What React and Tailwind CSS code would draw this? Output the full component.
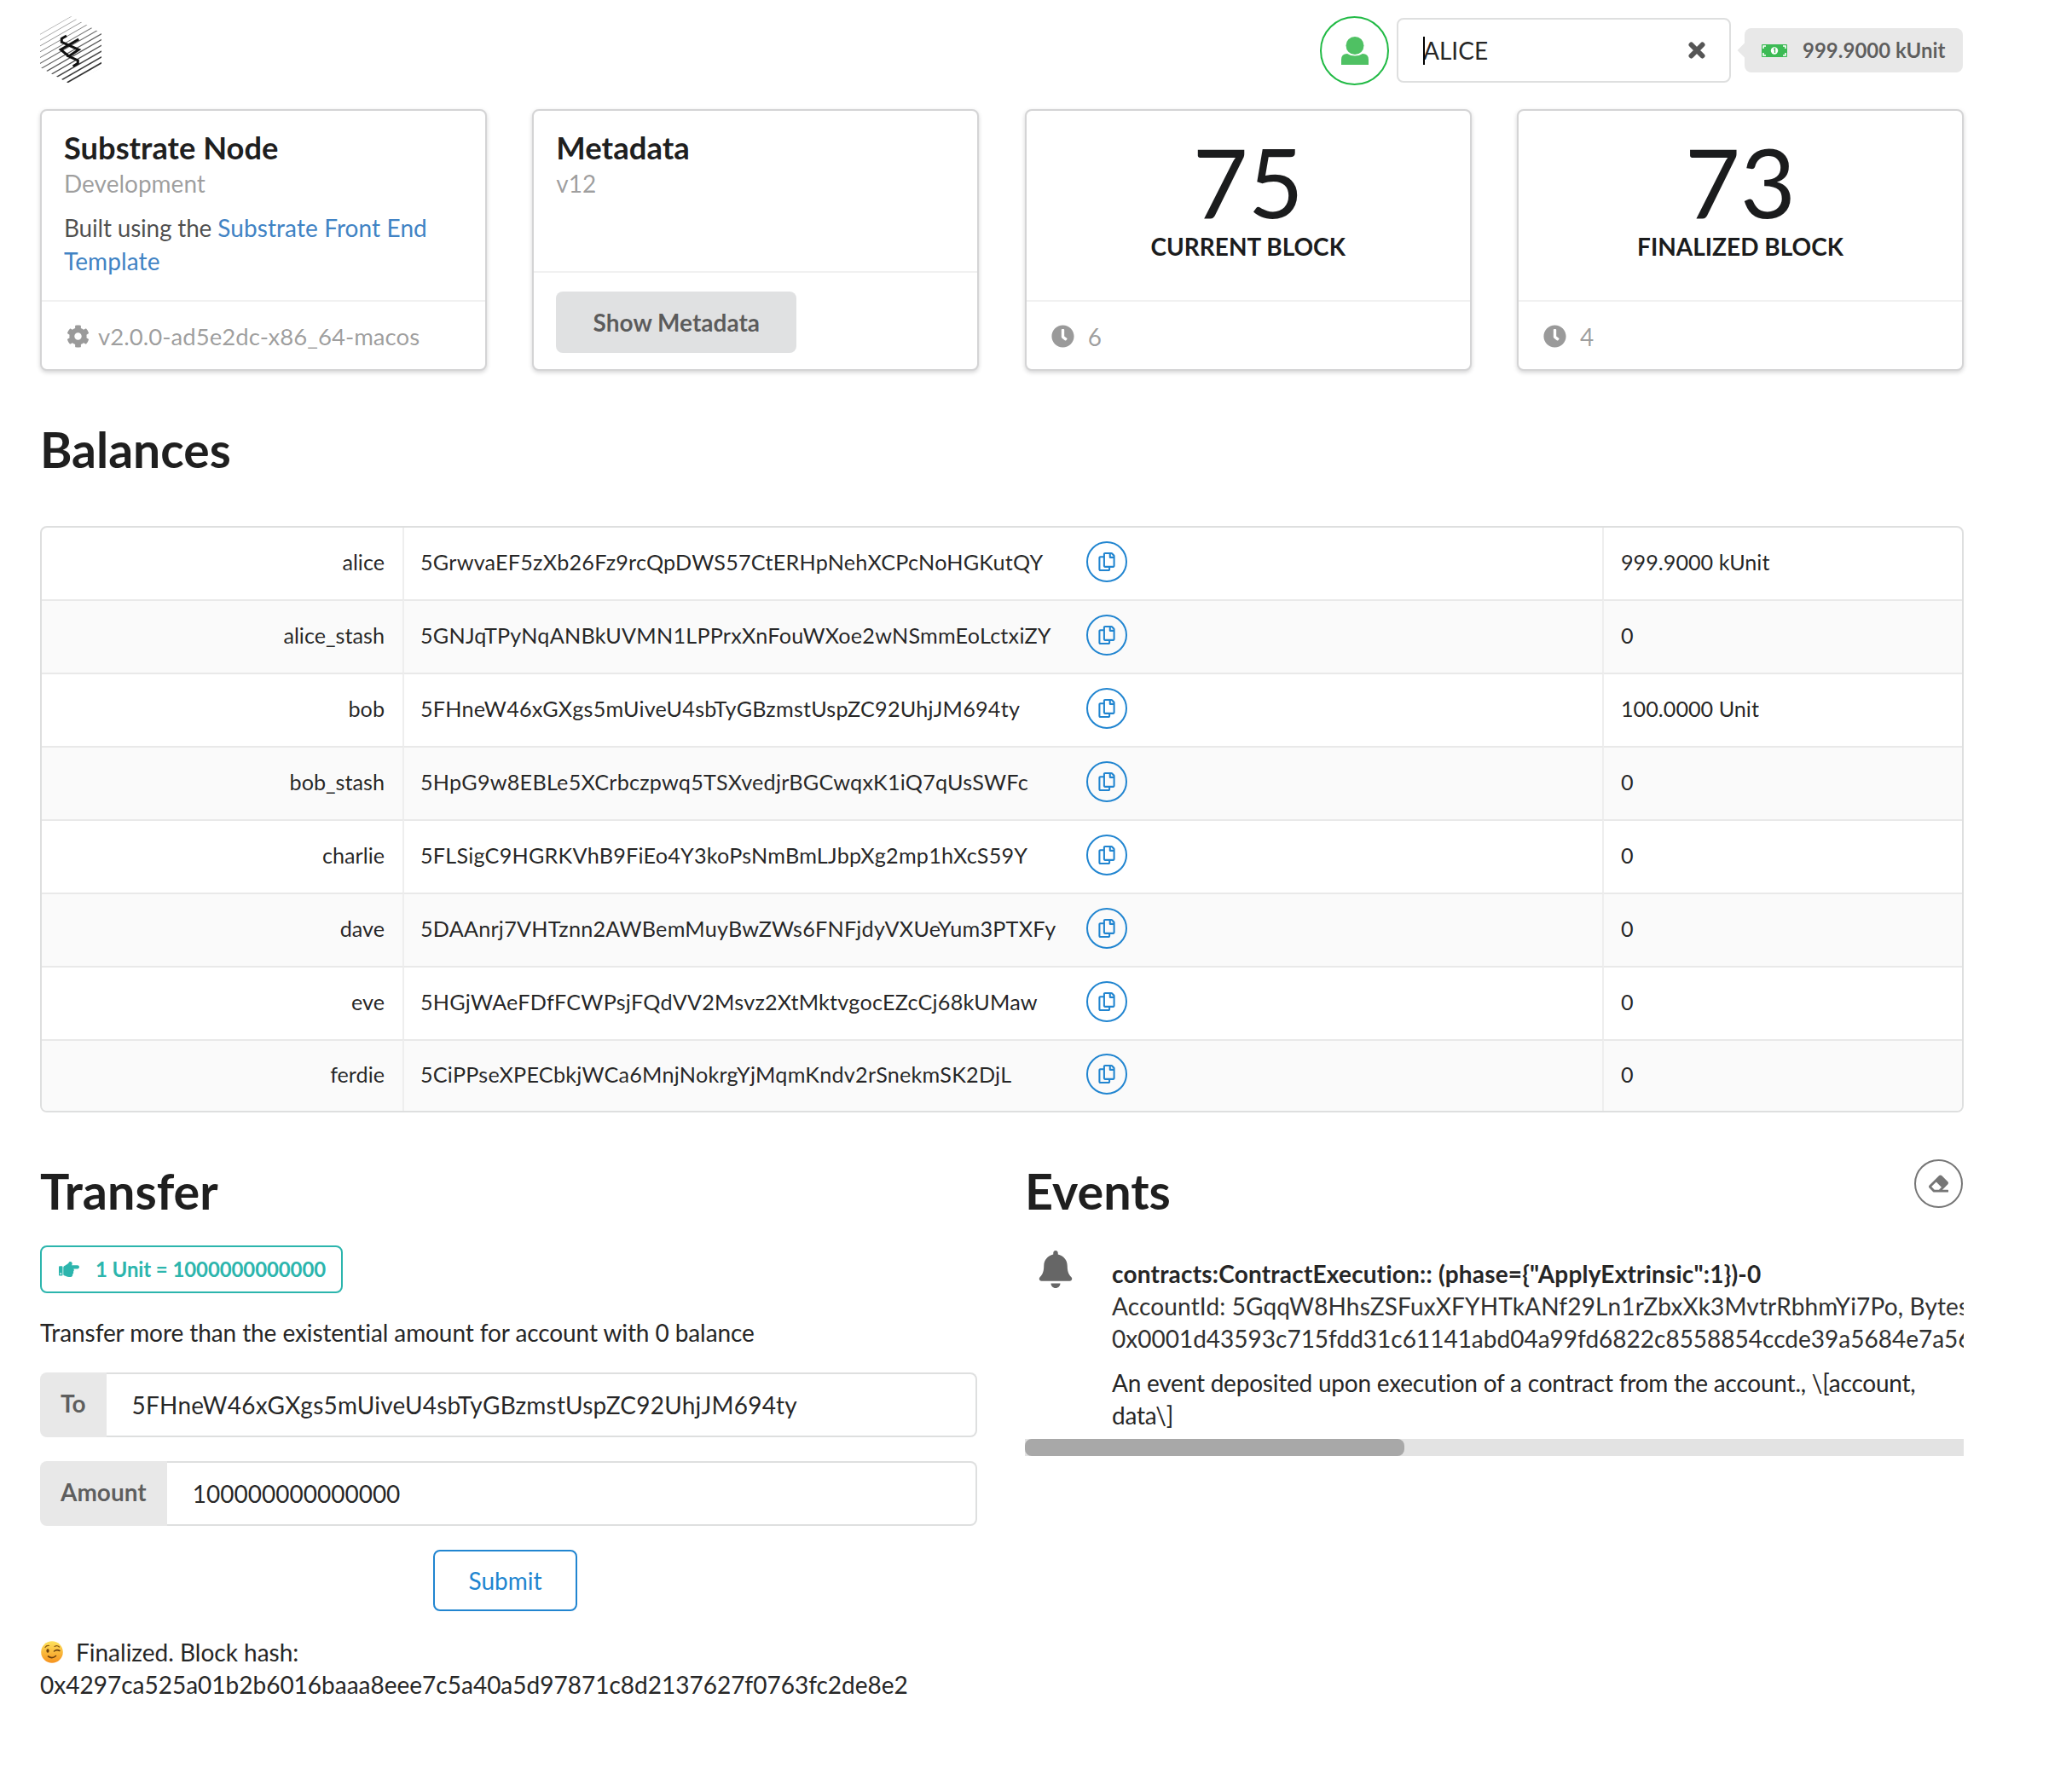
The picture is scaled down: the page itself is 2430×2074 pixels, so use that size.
import React from "react";
import { FaCog, FaClock, FaRegCopy, FaHandPointRight, FaBell, FaEraser } from "react-icons/fa";

const accounts = [
  { name: "alice", address: "5GrwvaEF5zXb26Fz9rcQpDWS57CtERHpNehXCPcNoHGKutQY", balance: "999.9000 kUnit" },
  { name: "alice_stash", address: "5GNJqTPyNqANBkUVMN1LPPrxXnFouWXoe2wNSmmEoLctxiZY", balance: "0" },
  { name: "bob", address: "5FHneW46xGXgs5mUiveU4sbTyGBzmstUspZC92UhjJM694ty", balance: "100.0000 Unit" },
  { name: "bob_stash", address: "5HpG9w8EBLe5XCrbczpwq5TSXvedjrBGCwqxK1iQ7qUsSWFc", balance: "0" },
  { name: "charlie", address: "5FLSigC9HGRKVhB9FiEo4Y3koPsNmBmLJbpXg2mp1hXcS59Y", balance: "0" },
  { name: "dave", address: "5DAAnrj7VHTznn2AWBemMuyBwZWs6FNFjdyVXUeYum3PTXFy", balance: "0" },
  { name: "eve", address: "5HGjWAeFDfFCWPsjFQdVV2Msvz2XtMktvgocEZcCj68kUMaw", balance: "0" },
  { name: "ferdie", address: "5CiPPseXPECbkjWCa6MnjNokrgYjMqmKndv2rSnekmSK2DjL", balance: "0" },
];

const hatch = Array.from({ length: 19 }, (_, i) => i);

function Logo() {
  return (
    <svg width="72" height="80" viewBox="0 0 72 80">
      <defs>
        <clipPath id="hex">
          <path d="M36 0 L72 20 V60 L36 80 L0 60 V20 Z" />
        </clipPath>
      </defs>
      <g clipPath="url(#hex)" stroke="#111">
        {hatch.map((i) => (
          <line
            key={i}
            x1="-4"
            x2="76"
            y1={24 + i * 6.8 - 14}
            y2={24 + i * 6.8 - 60}
            strokeWidth={0.5 + i * 0.09}
            strokeOpacity={0.35 + i * 0.04}
          />
        ))}
      </g>
      <g fill="none" stroke="#111" strokeWidth="3">
        <path d="M31 23 L25.3 26.3 V30.3 L45.3 39.3 L33.7 47 L44.3 52 V55.3 L38.7 58.7" />
        <path d="M45.3 27 L24.3 39.3 L33.7 47" />
      </g>
    </svg>
  );
}

function UserIcon() {
  return (
    <svg width="32" height="33" viewBox="0 0 32 33" fill="#4fc163">
      <circle cx="16" cy="10.5" r="10.5" />
      <path d="M0 33 V27 Q0 20 7 20 Q11 22.5 16 22.5 Q21 22.5 25 20 Q32 20 32 27 V33 Z" />
    </svg>
  );
}

function CloseIcon() {
  return (
    <svg width="20" height="20" viewBox="0 0 20 20">
      <path d="M3.5 3.5 L16.5 16.5 M16.5 3.5 L3.5 16.5" stroke="#555" strokeWidth="6" strokeLinecap="round" />
    </svg>
  );
}

function MoneyIcon() {
  return (
    <svg width="30" height="15" viewBox="0 0 30 15">
      <rect width="30" height="15" rx="1" fill="#3cba54" />
      <path d="M2 5 V2 H5 M25 2 H28 V5 M2 10 V13 H5 M28 10 V13 H25" fill="none" stroke="#fff" strokeWidth="1.6" />
      <circle cx="15" cy="7.5" r="4.2" fill="#fff" />
      <path d="M14 5.8 L15.5 5 V10" fill="none" stroke="#3cba54" strokeWidth="1.3" />
    </svg>
  );
}

function WinkFace() {
  return (
    <svg width="26" height="26" viewBox="0 0 26 26">
      <defs>
        <linearGradient id="wink" x1="0" y1="0" x2="0" y2="1">
          <stop offset="0" stopColor="#fde25c" />
          <stop offset="1" stopColor="#f6921e" />
        </linearGradient>
      </defs>
      <circle cx="13" cy="13" r="12.8" fill="url(#wink)" />
      <ellipse cx="8" cy="11.5" rx="1.6" ry="2.2" fill="#6b3f0c" />
      <path d="M15.5 12 Q18.5 9.5 22 11.5" fill="none" stroke="#6b3f0c" strokeWidth="1.5" strokeLinecap="round" />
      <path d="M5 7.5 Q6.5 5 9.5 5.5 M16 6.5 Q19 4.5 21.5 7" fill="none" stroke="#8a5a14" strokeWidth="1.2" strokeLinecap="round" />
      <path d="M8.5 18 Q13 21.5 17.5 17.5" fill="none" stroke="#6b3f0c" strokeWidth="1.6" strokeLinecap="round" />
    </svg>
  );
}

function Card({ children, footer, footerClass }) {
  return (
    <div className="h-[307px] flex flex-col border-2 border-[#d4d4d5] rounded-lg bg-white shadow-[0_2px_5px_0_#d4d4d5]">
      <div className="h-[222px] px-[26px] pt-[25px]">{children}</div>
      <div className={`flex-1 border-t-2 border-[#f1f1f1] ${footerClass}`}>{footer}</div>
    </div>
  );
}

function Stat({ value, label, footer }) {
  return (
    <Card
      footerClass="flex items-center px-[26px] pt-[2px] text-black/40"
      footer={
        <>
          <FaClock className="text-[27px] text-[#9a9a9a] mr-[16px] ml-[3px]" />
          <span>{footer}</span>
        </>
      }
    >
      <div className="text-center">
        <div className="text-[112px] leading-none text-[#1b1c1d] mt-[2px]">{value}</div>
        <div className="text-[28px] font-bold leading-[40px] uppercase text-[#1b1c1d]">{label}</div>
      </div>
    </Card>
  );
}

function FormInput({ label, value, inputClass }) {
  return (
    <div className="flex h-[76px]">
      <div className="px-[24px] flex items-start pt-[16px] bg-[#e8e8e8] rounded-l-lg font-bold text-black/60">{label}</div>
      <input
        readOnly
        value={value}
        className={`flex-1 px-[30px] border-2 border-l-0 border-[#dedfdf] rounded-r-lg outline-none text-black/87 font-['Lato'] text-[28px] ${inputClass}`}
      />
    </div>
  );
}

export default function App() {
  return (
    <div className="bg-white min-h-[2074px] font-['Lato',sans-serif] text-[28px] leading-[40px] text-black/87">
      <div className="w-[2256px] ml-[47px]">
        {/* top bar */}
        <div className="h-[128px] pb-[10px] flex items-center justify-between pr-[1px]">
          <Logo />
          <div className="flex items-center">
            <div className="w-[81px] h-[81px] rounded-full border-2 border-[#21ba45] flex items-center justify-center">
              <UserIcon />
            </div>
            <div className="w-[392px] h-[76px] ml-[9px] border-2 border-[#dedfdf] rounded-lg flex items-center justify-between pl-[29px] pr-[28px] relative">
              <span className="text-[#262626]">ALICE</span>
              <span className="absolute left-[29px] top-[20px] w-[1.5px] h-[33px] bg-black" />
              <CloseIcon />
            </div>
            <div className="relative ml-[16px] h-[52px] w-[256px] rounded-lg bg-[#e8e8e8] flex items-center pl-[20px] text-[24px] font-bold text-black/60">
              <span className="absolute left-[-6px] top-[20px] w-[12px] h-[12px] rotate-45 bg-[#e8e8e8]" />
              <MoneyIcon />
              <span className="ml-[18px]">999.9000 kUnit</span>
            </div>
          </div>
        </div>

        {/* cards */}
        <div className="grid grid-cols-[repeat(4,524px)] justify-between">
          <Card
            footerClass="flex items-center px-[26px] pt-[2px] text-black/40"
            footer={
              <>
                <FaCog className="text-[27px] text-[#9a9a9a] mr-[10px] ml-[3px]" />
                <span className="text-[27.6px]">v2.0.0-ad5e2dc-x86_64-macos</span>
              </>
            }
          >
            <div className="text-[36.3px] font-bold leading-[36px] text-[#1f1f1f]">Substrate Node</div>
            <div className="text-black/40 mt-[4px]">Development</div>
            <div className="mt-[13px] leading-[39px] text-black/70">
              <span className="tracking-[-0.2px]">Built using the </span>
              <span className="tracking-[0.1px] text-[#4183c4]">Substrate Front End Template</span>
            </div>
          </Card>
          <div className="h-[307px] flex flex-col border-2 border-[#d4d4d5] rounded-lg bg-white shadow-[0_2px_5px_0_#d4d4d5]">
            <div className="h-[188px] px-[26px] pt-[25px]">
              <div className="text-[36.5px] font-bold leading-[36px] text-[#1f1f1f]">Metadata</div>
              <div className="text-black/40 mt-[4px]">v12</div>
            </div>
            <div className="flex-1 border-t-2 border-[#f1f1f1] px-[26px] pt-[22px]">
              <button className="h-[72px] w-[282px] rounded-lg bg-[#e0e1e2] font-bold text-black/60">Show Metadata</button>
            </div>
          </div>
          <Stat value="75" label="Current Block" footer="6" />
          <Stat value="73" label="Finalized Block" footer="4" />
        </div>

        <h1 className="text-[57px] font-bold leading-[72px] mt-[56px] text-[#1f1f1f]">Balances</h1>

        {/* balances table */}
        <div className="mt-[54px] border-2 border-[#dedfdf] rounded-lg overflow-hidden">
          <table className="w-full border-separate border-spacing-0 table-fixed text-[25.2px]">
            <tbody>
              {accounts.map((a, i) => {
                const top = i > 0 ? "border-t-2 border-t-[#e9e9e9]" : "";
                return (
                  <tr key={a.name} className={`${i === 0 || i === 7 ? "h-[84px]" : "h-[86px]"} ${i % 2 === 1 ? "bg-[#fafafa]" : ""}`}>
                    <td className={`w-[425px] pr-[21px] pb-[5px] text-right border-r-2 border-r-[#eeeeee] ${top}`}>{a.name}</td>
                    <td className={`w-[1407px] pl-[19px] pb-[5px] border-r-2 border-r-[#eeeeee] ${top}`}>
                      <div className="flex items-center">
                        <span className="w-[781px] tracking-[0.22px]">{a.address}</span>
                        <button className="w-[48px] h-[48px] rounded-full border-2 border-[#2185d0] flex items-center justify-center text-[#2185d0]">
                          <FaRegCopy className="text-[22px]" />
                        </button>
                      </div>
                    </td>
                    <td className={`pl-[20px] pb-[5px] ${top}`}>{a.balance}</td>
                  </tr>
                );
              })}
            </tbody>
          </table>
        </div>

        {/* transfer and events */}
        <div className="grid grid-cols-[1099px_1101px] justify-between mt-[56px]">
          <div>
            <h1 className="text-[57.5px] font-bold leading-[72px] text-[#1f1f1f]">Transfer</h1>
            <div className="mt-[28px] w-[355px] h-[56px] border-2 border-[#2cb5ad] rounded-lg flex items-center pl-[20px] text-[24px] tracking-[-0.1px] font-bold text-[#2cb5ad]">
              <FaHandPointRight className="text-[24px] mr-[19px]" />
              <span>1 Unit = 1000000000000</span>
            </div>
            <p className="mt-[26px] tracking-[-0.09px] text-[#262626]">Transfer more than the existential amount for account with 0 balance</p>
            <div className="mt-[27px] flex flex-col gap-[28px]">
              <FormInput label="To" value="5FHneW46xGXgs5mUiveU4sbTyGBzmstUspZC92UhjJM694ty" inputClass="tracking-[0.22px]" />
              <FormInput label="Amount" value="100000000000000" inputClass="" />
            </div>
            <div className="mt-[28px] flex justify-center pr-[8px]">
              <button className="w-[169px] h-[72px] rounded-lg border-2 border-[#2185d0] text-[#2185d0]">Submit</button>
            </div>
            <div className="mt-[29px] leading-[38px] text-[#262626]">
              <div className="flex items-center pl-[1px]">
                <WinkFace />
                <span className="ml-[15px]">Finalized. Block hash:</span>
              </div>
              <div>0x4297ca525a01b2b6016baaa8eee7c5a40a5d97871c8d2137627f0763fc2de8e2</div>
            </div>
          </div>

          <div>
            <div className="flex justify-between items-start">
              <h1 className="text-[57.5px] font-bold leading-[72px] text-[#1f1f1f]">Events</h1>
              <button className="w-[57px] h-[57px] mr-[1px] mt-[-1px] rounded-full border-2 border-[#767676] flex items-center justify-center">
                <FaEraser className="text-[23px] text-[#767676]" />
              </button>
            </div>
            <div className="flex mt-[34px] overflow-hidden">
              <FaBell className="text-[44px] text-[#666] ml-[14px] shrink-0" />
              <div className="ml-[44px] pt-[8px] leading-[38px] whitespace-nowrap min-w-0">
                <div className="font-bold tracking-[0.2px] text-[#262626]">{'contracts:ContractExecution:: (phase={"ApplyExtrinsic":1})-0'}</div>
                <div className="tracking-[0.15px] text-[#303030]">AccountId: 5GqqW8HhsZSFuxXFYHTkANf29Ln1rZbxXk3MvtrRbhmYi7Po, Bytes:</div>
                <div className="text-[#303030]">0x0001d43593c715fdd31c61141abd04a99fd6822c8558854ccde39a5684e7a56da27d</div>
                <div className="mt-[14px] whitespace-normal w-[1000px] tracking-[-0.22px] text-[#262626]">An event deposited upon execution of a contract from the account., \[account, data\]</div>
              </div>
            </div>
            <div className="mt-[9px] h-[20px] bg-[#e3e3e3]">
              <div className="h-full w-[445px] bg-[#a8a8a8] rounded-[8px]" />
            </div>
          </div>
        </div>
      </div>
    </div>
  );
}
